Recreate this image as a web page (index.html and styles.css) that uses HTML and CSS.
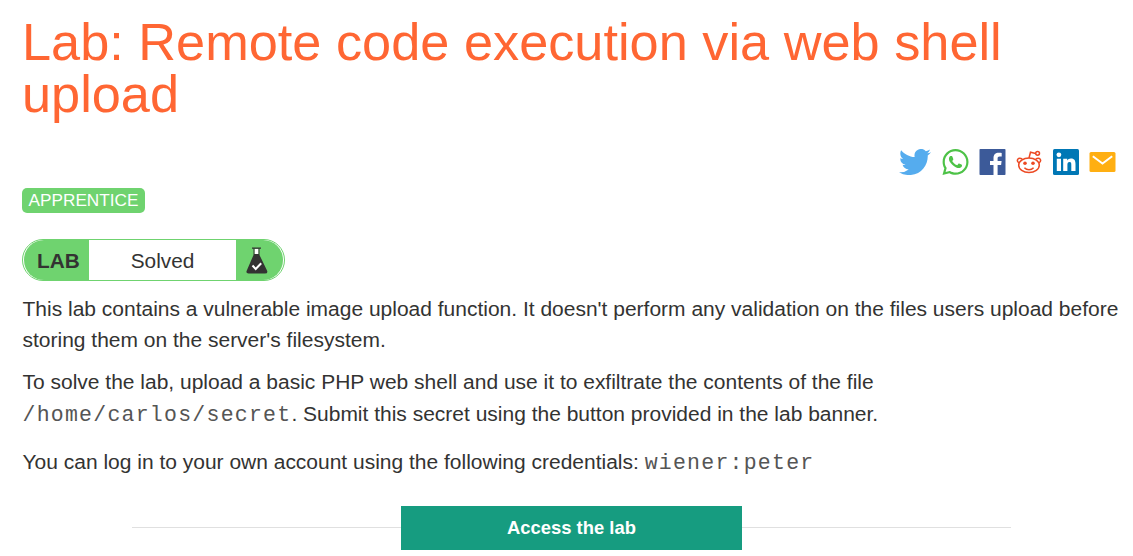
FILE: index.html
```html
<!DOCTYPE html>
<html lang="en">
<head>
<meta charset="utf-8">
<title>Lab: Remote code execution via web shell upload</title>
<link rel="stylesheet" href="styles.css">
</head>
<body>
<main class="page">
  <h1 class="title">Lab: Remote code execution via web shell<br>upload</h1>

  <div class="share">
    <svg class="twitter" viewBox="0 2.2 24 19.5" preserveAspectRatio="none"><path fill="#55acee" d="M23.953 4.57a10 10 0 01-2.825.775 4.958 4.958 0 002.163-2.723c-.951.555-2.005.959-3.127 1.184a4.92 4.92 0 00-8.384 4.482C7.69 8.095 4.067 6.13 1.64 3.162a4.822 4.822 0 00-.666 2.475c0 1.71.87 3.213 2.188 4.096a4.904 4.904 0 01-2.228-.616v.06a4.923 4.923 0 003.946 4.827 4.996 4.996 0 01-2.212.085 4.936 4.936 0 004.604 3.417 9.867 9.867 0 01-6.102 2.105c-.39 0-.779-.023-1.17-.067a13.995 13.995 0 007.557 2.209c9.053 0 13.998-7.496 13.998-13.985 0-.21 0-.42-.015-.63A9.935 9.935 0 0024 4.59z"/></svg>
    <svg class="whatsapp" viewBox="0 32 448 448"><path fill="#4dc247" d="M380.9 97.1C339 55.1 283.2 32 223.9 32c-122.4 0-222 99.6-222 222 0 39.1 10.2 77.3 29.6 111L0 480l117.7-30.9c32.4 17.7 68.9 27 106.1 27h.1c122.3 0 224.1-99.6 224.1-222 0-59.3-25.2-115-67.1-157zm-157 341.6c-33.2 0-65.7-8.9-94-25.7l-6.7-4-69.8 18.3L72 359.2l-4.4-7c-18.5-29.4-28.2-63.3-28.2-98.2 0-101.7 82.8-184.5 184.6-184.5 49.3 0 95.6 19.2 130.4 54.1 34.8 34.900 56.200 81.200 56.100 130.500 0 101.800-84.900 184.600-186.600 184.600zm101.200-138.200c-5.500-2.800-32.800-16.200-37.900-18-5.100-1.900-8.800-2.800-12.500 2.800-3.700 5.600-14.300 18-17.600 21.800-3.200 3.700-6.500 4.200-12 1.400-32.600-16.300-54-29.100-75.500-66-5.700-9.800 5.700-9.100 16.300-30.300 1.800-3.700.9-6.900-.5-9.700-1.400-2.800-12.500-30.100-17.100-41.200-4.500-10.800-9.100-9.300-12.500-9.500-3.200-.2-6.900-.2-10.600-.2-3.700 0-9.700 1.400-14.800 6.900-5.100 5.600-19.400 19-19.400 46.300 0 27.300 19.900 53.700 22.600 57.400 2.800 3.700 39.100 59.700 94.800 83.800 35.200 15.200 49 16.500 66.600 13.900 10.700-1.600 32.800-13.400 37.400-26.400 4.600-13 4.600-24.100 3.200-26.400-1.300-2.500-5-3.900-10.500-6.600z"/></svg>
    <svg class="facebook" viewBox="0 0 26 26"><rect width="26" height="26" rx=".8" fill="#3c5a99"/><path fill="#fff" d="M14 26V16h-3.500v-4H14V9c0-3.500 2.100-5.300 5.200-5.300 1.500 0 2.500.1 3 .2v3.500h-2c-1.700 0-2.100.8-2.100 2V12h4l-.5 4h-3.500v10z"/></svg>
    <svg class="reddit" viewBox="0 0 26 24" fill="none" stroke="#ec4a24" stroke-width="1.500"><ellipse cx="13" cy="15.200" rx="10.300" ry="7.200"/><path d="M13 8l1.500-5.800 5.200 1.300"/><circle cx="21.600" cy="3.300" r="1.900"/><path d="M3 12.800C-.2 10.500 2 6.600 6.300 9M23 12.800c3.200-2.300 1-6.200-3.300-3.800"/><path d="M8.400 17.800c2.500 2.600 6.700 2.600 9.200 0"/><circle cx="9" cy="13.200" r="1.800" fill="#ec4a24" stroke="none"/><circle cx="17" cy="13.200" r="1.800" fill="#ec4a24" stroke="none"/></svg>
    <svg class="linkedin" viewBox="0 0 26 26"><rect width="26" height="26" rx="1.500" fill="#0077b5"/><g fill="#fff"><circle cx="5.900" cy="5.800" r="2.400"/><path d="M3.800 9.800h4.200V22H3.800zM10.200 9.800h4v1.700c.7-1.200 2-2 3.700-2 3.800 0 4.600 2.400 4.600 5.700V22h-4.200v-6c0-1.600-.1-2.900-1.700-2.900-1.800 0-2.200 1.100-2.200 2.800V22h-4.200z"/></g></svg>
    <svg class="mail" viewBox="0 0 26 20"><rect width="26" height="20" rx="1.500" fill="#ffaf12"/><path d="M3.300 4.200l9.700 7.400 9.700-7.400" fill="none" stroke="#fff" stroke-width="2"/></svg>
  </div>

  <span class="level">APPRENTICE</span>

  <div class="status">
    <span class="status-label">LAB</span>
    <span class="status-text">Solved</span>
    <span class="status-icon">
      <svg viewBox="0 0 22 27"><path fill="#fff" d="M8.500 2h4v6h-4z"/><path fill="#333332" d="M6 .5h9v1.300h-1.500V8L21 23.500q1.300 3-2 3H2.500q-3 0-1.700-3L7.500 8V1.800H6zM8.500 1.800v5.200h4V1.800z" fill-rule="evenodd"/><path d="M6.500 18.500l3.200 3.500 5.500-5.800" fill="none" stroke="#fff" stroke-width="2"/></svg>
    </span>
  </div>

  <p class="text first">This lab contains a vulnerable image upload function. It doesn't perform any validation on the files users upload before<br>storing them on the server's filesystem.</p>
  <p class="text second">To solve the lab, upload a basic PHP web shell and use it to exfiltrate the contents of the file<br><code>/home/carlos/secret</code>. Submit this secret using the button provided in the lab banner.</p>
  <p class="text third">You can log in to your own account using the following credentials: <code>wiener:peter</code></p>

  <div class="launch">
    <span class="rule"></span>
    <a class="button">Access the lab</a>
    <span class="rule"></span>
  </div>
</main>
</body>
</html>
```
FILE: styles.css
```css
* { box-sizing: border-box; }
body {
  margin: 0;
  background: #fff;
  color: #333332;
  font-family: "Liberation Sans", Arial, sans-serif;
}
.page {
  display: flex;
  flex-direction: column;
  align-items: flex-start;
  height: 556px;
  padding: 16px 0 0 22px;
  overflow: hidden;
}
.title {
  margin: 0;
  color: #ff6633;
  font-size: 52.3px;
  font-weight: 400;
  line-height: 52px;
  white-space: nowrap;
}
.share {
  display: flex;
  align-items: center;
  align-self: flex-end;
  height: 26px;
  margin: 29px 17px 0 0;
}
.share svg { display: block; }
.twitter { width: 32px; height: 26px; margin-right: 11px; }
.whatsapp { width: 27px; height: 26px; margin-right: 10px; }
.facebook { width: 27px; height: 26px; margin-right: 10px; }
.reddit { width: 26px; height: 24px; margin-right: 11px; }
.linkedin { width: 26px; height: 26px; margin-right: 10px; }
.mail { width: 27px; height: 20px; }
.level {
  width: 123px;
  height: 25px;
  margin-top: 13px;
  border-radius: 5px;
  background: #6fd36f;
  color: #fff;
  font-size: 17.2px;
  line-height: 25px;
  text-align: center;
}
.status {
  display: flex;
  width: 263px;
  height: 42px;
  margin-top: 26px;
  padding: 0 1px;
  border: 1px solid #6fd36f;
  border-radius: 21px;
  font-size: 20.8px;
  line-height: 42px;
}
.status-label {
  width: 65px;
  padding-left: 13px;
  border-radius: 20px 0 0 20px;
  background: #6fd36f;
  font-weight: 700;
}
.status-text { flex: 1; text-align: center; }
.status-icon {
  display: flex;
  align-items: center;
  width: 47px;
  padding-left: 10px;
  border-radius: 0 20px 20px 0;
  background: #6fd36f;
}
.status-icon svg { width: 22px; height: 27px; }
.text {
  margin: 0;
  padding-left: 0.5px;
  font-size: 20.99px;
  line-height: 31px;
  white-space: nowrap;
}
.first { margin-top: 12px; }
.second { margin-top: 11px; line-height: 32px; }
.third { margin-top: 16px; }
code {
  color: #555;
  font-family: "Liberation Mono", "Courier New", monospace;
  font-size: 21.5px;
  letter-spacing: 1.25px;
  line-height: 1;
}
.launch {
  display: flex;
  align-items: center;
  width: 879px;
  margin: 29px 0 0 110px;
}
.rule { flex: 1; height: 1px; margin-bottom: 1px; background: #e0e0e0; }
.button {
  width: 341px;
  height: 44px;
  background: #169c80;
  color: #fff;
  font-size: 18.4px;
  font-weight: 700;
  line-height: 44px;
  text-align: center;
}
```
